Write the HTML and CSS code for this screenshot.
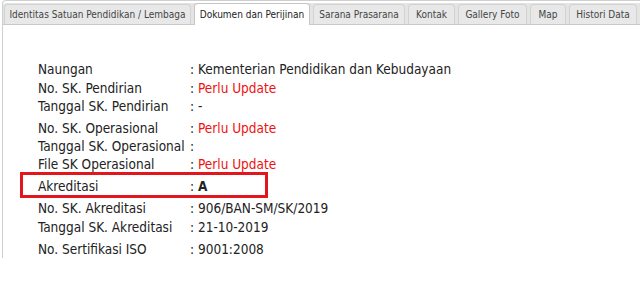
FILE: index.html
```html
<!DOCTYPE html>
<html>
<head>
<meta charset="utf-8">
<link rel="stylesheet" href="styles.css">
</head>
<body>
<div class="tabs">
  <ul class="tab-nav">
    <li class="tab t1">Identitas Satuan Pendidikan / Lembaga</li>
    <li class="tab t2 active">Dokumen dan Perijinan</li>
    <li class="tab t3">Sarana Prasarana</li>
    <li class="tab t4">Kontak</li>
    <li class="tab t5">Gallery Foto</li>
    <li class="tab t6">Map</li>
    <li class="tab t7">Histori Data</li>
  </ul>
  <div class="panel">
    <div class="info">
      <div class="row"><span class="lbl">Naungan</span><span class="val">: Kementerian Pendidikan dan Kebudayaan</span></div>
      <div class="row g1"><span class="lbl">No. SK. Pendirian</span><span class="val">: <span class="red">Perlu Update</span></span></div>
      <div class="row"><span class="lbl">Tanggal SK. Pendirian</span><span class="val">: -</span></div>
      <div class="row g4"><span class="lbl">No. SK. Operasional</span><span class="val">: <span class="red">Perlu Update</span></span></div>
      <div class="row"><span class="lbl">Tanggal SK. Operasional</span><span class="val">:</span></div>
      <div class="row"><span class="lbl">File SK Operasional</span><span class="val">: <span class="red">Perlu Update</span></span></div>
      <div class="row g4 boxed"><span class="lbl">Akreditasi</span><span class="val">: <b>A</b></span></div>
      <div class="row g4"><span class="lbl">No. SK. Akreditasi</span><span class="val">: 906/BAN-SM/SK/2019</span></div>
      <div class="row g1"><span class="lbl">Tanggal SK. Akreditasi</span><span class="val">: 21-10-2019</span></div>
      <div class="row g4"><span class="lbl">No. Sertifikasi ISO</span><span class="val">: 9001:2008</span></div>
    </div>
  </div>
</div>
</body>
</html>
```

FILE: styles.css
```css
html, body {
  margin: 0;
  padding: 0;
  background: #fff;
  font-family: "DejaVu Sans Condensed", "DejaVu Sans", Verdana, sans-serif;
}
.tabs {
  margin: 0 0 0 2px;
  padding: 2px 0 0 0;
  border-left: 1px solid #cfcfcf;
  border-top: 1px solid #cfcfcf;
  border-radius: 4px 0 0 0;
}
.tab-nav {
  list-style: none;
  margin: 0;
  padding: 0 0 0 1px;
  display: flex;
  gap: 3px;
  background: #e4e4e4;
  border-bottom: 1px solid #c9c9c9;
  height: 21px;
  align-items: flex-end;
  border-radius: 3px 0 0 0;
}
.tab {
  height: 20px;
  box-sizing: border-box;
  padding: 0;
  text-align: center;
  font-size: 10px;
  line-height: 19px;
  color: #444;
  background: #e8e8e8;
  border: 1px solid #d2d2d2;
  border-bottom: none;
  border-radius: 4px 4px 0 0;
  white-space: nowrap;
  overflow: hidden;
}
.t1 { width: 187px; }
.t2 { width: 116px; }
.t3 { width: 92px; }
.t4 { width: 47px; }
.t5 { width: 69px; }
.t6 { width: 36px; }
.t7 { width: 68px; }
.tab.active {
  background: #fff;
  border-color: #c6c6c6;
  color: #222;
  height: 22px;
  margin-bottom: -1px;
  line-height: 21px;
}
.panel {
  padding: 35px 0 0 35px;
}
.info {
  font-size: 13.5px;
  color: #222;
}
.row {
  display: flex;
  height: 18px;
  line-height: 18px;
  white-space: nowrap;
}
.g1 { margin-top: 1px; }
.g4 { margin-top: 4px; }
.lbl {
  width: 152px;
  flex: none;
}
.red {
  color: #f01010;
}
.boxed {
  position: relative;
}
.boxed::before {
  content: "";
  position: absolute;
  left: -18px;
  top: -5px;
  width: 248px;
  height: 26px;
  box-sizing: border-box;
  border: 3px solid #e3161e;
}
```
